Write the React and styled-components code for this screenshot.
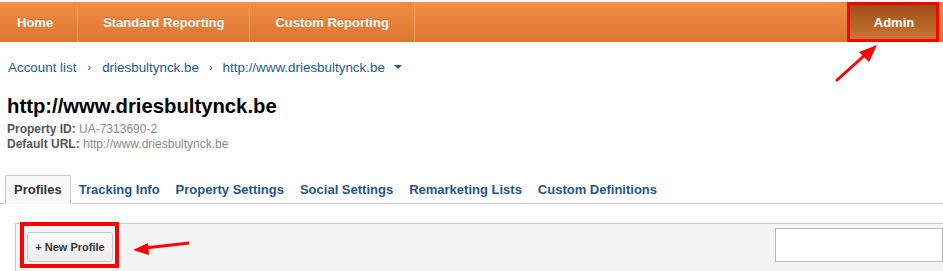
import React from 'react'
import styled, { createGlobalStyle } from 'styled-components'

const GlobalStyle = createGlobalStyle`
    body {
        margin: 0;
        background: #fff;
        font-family: "Liberation Sans", Arial, sans-serif;
    }
`

const Page = styled.div`
    position: relative;
    width: 943px;
    height: 271px;
    overflow: hidden;
    padding-top: 2px;
    box-sizing: border-box;
`

const NavBar = styled.div`
    display: flex;
    height: 40px;
    background: linear-gradient(#f48d42, #db7534);
`

const NavItem = styled.div`
    display: flex;
    align-items: center;
    padding: 0 ${(p) => (p.first ? '24px 0 17px' : '25px')};
    border-right: 1px solid #f6a56a;
    color: #fff;
    font-size: 13px;
    font-weight: bold;
    text-shadow: 0 -1px 0 rgba(120, 50, 0, 0.35);
`

const Spacer = styled.div`
    flex: 1;
`

const AdminItem = styled.div`
    display: flex;
    align-items: center;
    justify-content: center;
    box-sizing: border-box;
    width: 92px;
    margin-right: 4px;
    border: 3px solid #f00;
    background: linear-gradient(#9e4f1b, #cb7434);
    color: #fff;
    font-size: 13px;
    font-weight: bold;
    padding-left: 2px;
`

const Crumbs = styled.div`
    display: flex;
    align-items: center;
    height: 16px;
    margin: 17px 0 0 8px;
    font-size: 13.4px;
    color: #1a5a96;
`

const CrumbSep = styled.span`
    margin: 0 ${(p) => p.gap || 10}px;
    color: #333;
    font-size: 11px;
`

const Caret = styled.span`
    margin-left: 9px;
    width: 0;
    height: 0;
    border-left: 4px solid transparent;
    border-right: 4px solid transparent;
    border-top: 4px solid #1a5a96;
`

const Title = styled.h1`
    margin: 20px 0 0 7px;
    font-size: 20.3px;
    line-height: 23px;
    font-weight: bold;
    color: #000;
`

const MetaRow = styled.div`
    margin-left: 7px;
    margin-top: ${(p) => p.top || 0}px;
    font-size: 12px;
    line-height: 15px;
    color: #888;
`

const MetaLabel = styled.span`
    font-weight: bold;
    color: #555;
`

const Tabs = styled.div`
    display: flex;
    align-items: flex-end;
    height: 28px;
    margin-top: 23px;
    padding-left: 5px;
    border-bottom: 1px solid #c8c8c8;
`

const Tab = styled.div`
    display: flex;
    align-items: center;
    box-sizing: border-box;
    height: ${(p) => (p.active ? '29px' : '28px')};
    margin-bottom: ${(p) => (p.active ? '-1px' : '0')};
    padding: 0 8px;
    font-size: 13px;
    font-weight: bold;
    color: ${(p) => (p.active ? '#333' : '#1c5590')};
    ${(p) =>
        p.active &&
        `
        border: 1px solid #c8c8c8;
        border-bottom: 1px solid #f7f7f7;
        border-radius: 2px 2px 0 0;
        background: #f7f7f7;
    `}
`

const Panel = styled.div`
    display: flex;
    justify-content: space-between;
    align-items: flex-start;
    height: 60px;
    margin: 19px 0 0 15px;
    padding: 4px 0 0 11px;
    border-top: 1px solid #c8c8c8;
    border-left: 1px solid #c8c8c8;
    background: #f4f4f4;
`

const Highlight = styled.div`
    position: relative;
    margin-top: 4px;

    &::after {
        content: '';
        position: absolute;
        left: -7px;
        top: -10px;
        width: 91px;
        height: 38px;
        border: 4px solid #f00;
    }
`

const Button = styled.button`
    display: block;
    box-sizing: border-box;
    width: 86px;
    height: 30px;
    padding: 0;
    border: 1px solid #c6c6c6;
    border-radius: 3px;
    background: linear-gradient(#fafafa, #ececec);
    color: #333;
    font-family: inherit;
    font-size: 11px;
    font-weight: bold;
`

const Search = styled.input`
    box-sizing: border-box;
    width: 168px;
    height: 34px;
    border: 1px solid #b8b8b8;
    background: #fff;
`

const Arrow = styled.svg`
    position: absolute;
    left: 0;
    top: 0;
    pointer-events: none;
`

export default function App() {
    return (
        <Page>
            <GlobalStyle />
            <NavBar>
                <NavItem first>Home</NavItem>
                <NavItem>Standard Reporting</NavItem>
                <NavItem>Custom Reporting</NavItem>
                <Spacer />
                <AdminItem>Admin</AdminItem>
            </NavBar>
            <Crumbs>
                <span>Account list</span>
                <CrumbSep gap={11}>›</CrumbSep>
                <span>driesbultynck.be</span>
                <CrumbSep>›</CrumbSep>
                <span>http://www.driesbultynck.be</span>
                <Caret />
            </Crumbs>
            <Title>http://www.driesbultynck.be</Title>
            <MetaRow top={4}>
                <MetaLabel>Property ID:</MetaLabel> UA-7313690-2
            </MetaRow>
            <MetaRow>
                <MetaLabel>Default URL:</MetaLabel> http://www.driesbultynck.be
            </MetaRow>
            <Tabs>
                <Tab active>Profiles</Tab>
                <Tab>Tracking Info</Tab>
                <Tab>Property Settings</Tab>
                <Tab>Social Settings</Tab>
                <Tab>Remarketing Lists</Tab>
                <Tab>Custom Definitions</Tab>
            </Tabs>
            <Panel>
                <Highlight>
                    <Button>+ New Profile</Button>
                </Highlight>
                <Search />
            </Panel>
            <Arrow width="943" height="271">
                <line x1="836" y1="81" x2="866" y2="54" stroke="#f00" strokeWidth="3" />
                <polygon points="877,45 859,52 869,62" fill="#f00" />
                <line x1="189" y1="243" x2="145" y2="248" stroke="#f00" strokeWidth="3" />
                <polygon points="133,250 148,243 149,255" fill="#f00" />
            </Arrow>
        </Page>
    )
}
